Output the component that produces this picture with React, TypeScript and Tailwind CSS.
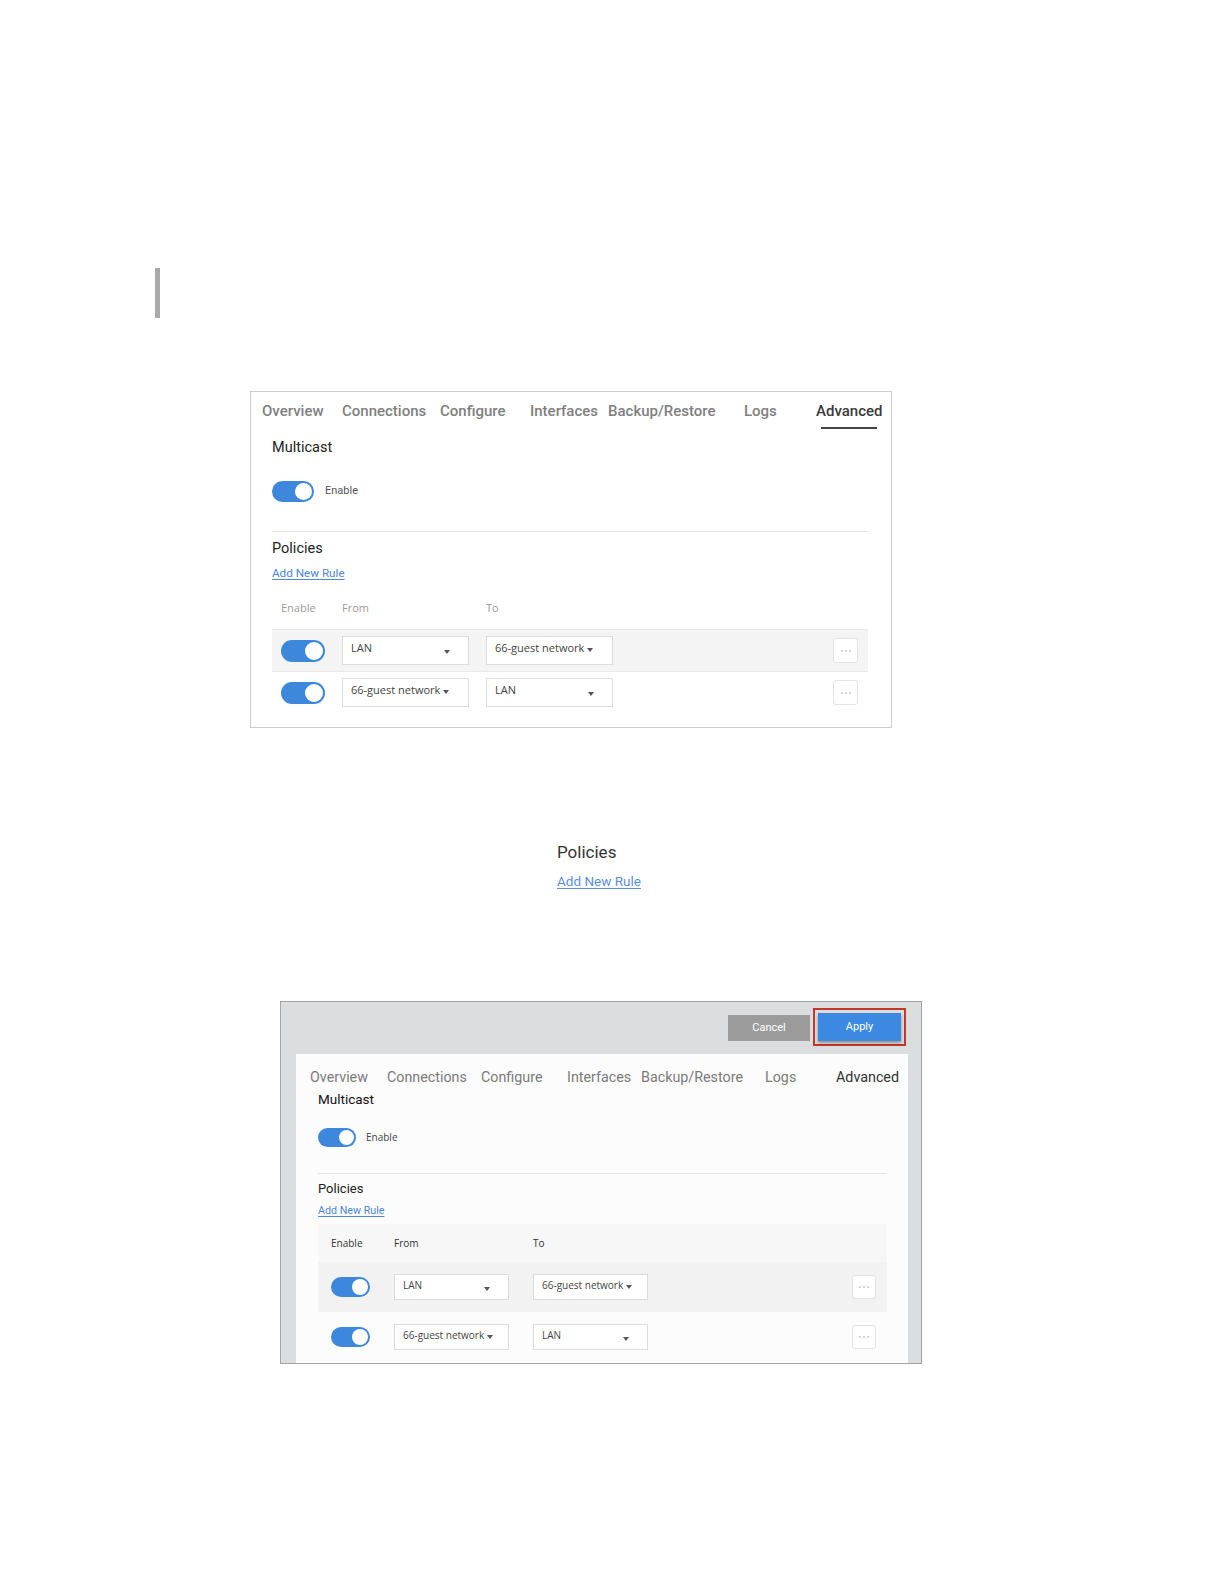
import React from "react";

const roboto = { fontFamily: "Roboto, 'Liberation Sans', Arial, sans-serif" };
const open = { fontFamily: "'Open Sans', 'Noto Sans', Arial, sans-serif" };

function Toggle({ w, h }: { w: number; h: number }) {
  const knob = h - 4;
  return (
    <div
      className="rounded-full bg-[#3d87dc] flex items-center justify-end pr-[2px] shrink-0"
      style={{ width: w, height: h }}
    >
      <div className="rounded-full bg-white" style={{ width: knob, height: knob }} />
    </div>
  );
}

function Caret() {
  return (
    <span className="inline-block w-0 h-0 border-l-[3px] border-r-[3px] border-t-[4px] border-l-transparent border-r-transparent border-t-[#555] ml-[3px] mt-[3px] shrink-0" />
  );
}

function Select({
  label,
  w,
  h,
  fs,
  spread,
}: {
  label: string;
  w: number;
  h: number;
  fs: number;
  spread: boolean;
}) {
  return (
    <div
      className="bg-white border border-[#dcdcdc] flex items-center pl-[8px] pr-[6px] text-[#444] shrink-0 whitespace-nowrap overflow-hidden"
      style={{ width: w, height: h, fontSize: fs, ...open }}
    >
      {spread ? (
        <div className="flex w-full items-center justify-between pr-[12px]">
          <span className="-mt-[4px]">{label}</span>
          <Caret />
        </div>
      ) : (
        <div className="flex items-center -mt-[4px]">
          <span>{label}</span>
          <Caret />
        </div>
      )}
    </div>
  );
}

function Dots({ s }: { s: number }) {
  return (
    <div
      className="bg-white border border-[#e3e3e3] rounded-[3px] flex items-center justify-center gap-[2px] shrink-0"
      style={{ width: s, height: s }}
    >
      <span className="w-[2px] h-[2px] rounded-full bg-[#c8c8c8]" />
      <span className="w-[2px] h-[2px] rounded-full bg-[#c8c8c8]" />
      <span className="w-[2px] h-[2px] rounded-full bg-[#c8c8c8]" />
    </div>
  );
}

export default function App() {
  return (
    <div className="w-[1224px] h-[1584px] bg-white overflow-hidden pt-[268px]">
      {/* left bar */}
      <div className="ml-[155px] w-[5px] h-[50px] bg-[#a9a9a9]" />

      {/* Panel 1 */}
      <div className="mt-[73px] ml-[250px] w-[642px] h-[337px] border border-[#cbcbcb] bg-white flex flex-col">
        <div className="flex pl-[11px] text-[15px] font-medium text-[#7f7f7f]" style={roboto}>
          <div className="w-[80px] pt-[9px] leading-[20px]">Overview</div>
          <div className="w-[98px] pt-[9px] leading-[20px]">Connections</div>
          <div className="w-[90px] pt-[9px] leading-[20px]">Configure</div>
          <div className="w-[78px] pt-[9px] leading-[20px]">Interfaces</div>
          <div className="w-[136px] pt-[9px] leading-[20px]">Backup/Restore</div>
          <div className="w-[72px] pt-[9px] leading-[20px]">Logs</div>
          <div className="flex flex-col">
            <div className="pt-[9px] leading-[20px] text-[#3a3a3a]">Advanced</div>
            <div className="mt-[6px] ml-[5px] w-[56px] h-[2px] bg-[#444]" />
          </div>
        </div>

        <div className="pl-[21px] pr-[23px]">
          <div className="mt-[9px] leading-[20px] text-[14.5px] text-[#222]" style={roboto}>
            Multicast
          </div>
          <div className="mt-[23px] flex items-center">
            <Toggle w={42} h={21} />
            <span className="ml-[11px] text-[11px] text-[#555]" style={roboto}>
              Enable
            </span>
          </div>
          <div className="mt-[29px] h-px bg-[#e2e2e2]" />
          <div className="mt-[7px] leading-[20px] text-[14.5px] text-[#222]" style={roboto}>
            Policies
          </div>
          <div
            className="mt-[7px] leading-[14px] text-[11.7px] text-[#4d86d6] underline underline-offset-2"
            style={roboto}
          >
            Add New Rule
          </div>
          <div
            className="mt-[21px] flex leading-[14px] text-[11px] text-[#9a9a9a]"
            style={open}
          >
            <div className="w-[70px] pl-[9px]">Enable</div>
            <div className="w-[144px]">From</div>
            <div>To</div>
          </div>
          <div className="mt-[14px] h-[42px] bg-[#f4f4f4] border-t border-[#e8e8e8] flex items-center">
            <div className="w-[70px] pl-[9px]">
              <Toggle w={44} h={22} />
            </div>
            <div className="w-[144px]">
              <Select label="LAN" w={127} h={29} fs={11} spread />
            </div>
            <Select label="66-guest network" w={127} h={29} fs={11} spread={false} />
            <div className="ml-auto mr-[10px]">
              <Dots s={25} />
            </div>
          </div>
          <div className="h-[42px] border-t border-[#e8e8e8] flex items-center">
            <div className="w-[70px] pl-[9px]">
              <Toggle w={44} h={22} />
            </div>
            <div className="w-[144px]">
              <Select label="66-guest network" w={127} h={29} fs={11} spread={false} />
            </div>
            <Select label="LAN" w={127} h={29} fs={11} spread />
            <div className="ml-auto mr-[10px]">
              <Dots s={25} />
            </div>
          </div>
        </div>
      </div>

      {/* Middle snippet */}
      <div className="mt-[114px] ml-[557px]">
        <div className="leading-[20px] text-[17px] text-[#333]" style={roboto}>
          Policies
        </div>
        <div
          className="mt-[11px] leading-[16px] text-[13.5px] text-[#5a8fdc] underline underline-offset-2"
          style={roboto}
        >
          Add New Rule
        </div>
      </div>

      {/* Panel 2 */}
      <div className="mt-[112px] ml-[280px] w-[642px] h-[363px] border border-[#a3a3a3] bg-[#dcdddf] flex flex-col overflow-hidden">
        <div className="pt-[6px] pr-[15px] flex justify-end items-center">
          <div
            className="w-[82px] h-[26px] bg-[#9b9b9b] text-white text-[11px] flex items-center justify-center mt-[2px]"
            style={roboto}
          >
            Cancel
          </div>
          <div className="ml-[3px] border-2 border-[#c0392b] p-[3px]">
            <div
              className="w-[83px] h-[28px] bg-[#3b89e0] text-white text-[11px] flex items-center justify-center shadow-[0_2px_3px_rgba(0,0,0,0.35)]"
              style={roboto}
            >
              Apply
            </div>
          </div>
        </div>

        <div className="mt-[8px] ml-[15px] w-[612px] flex-1 bg-[#fcfcfc] flex flex-col">
          <div className="flex pl-[14px] pt-[13px] leading-[20px] text-[14.3px] text-[#7a7a7a]" style={roboto}>
            <div className="w-[77px]">Overview</div>
            <div className="w-[94px]">Connections</div>
            <div className="w-[86px]">Configure</div>
            <div className="w-[74px]">Interfaces</div>
            <div className="w-[124px]">Backup/Restore</div>
            <div className="w-[71px]">Logs</div>
            <div className="text-[#333]">Advanced</div>
          </div>
          <div className="pl-[22px] pr-[21px]">
            <div className="mt-[2px] leading-[20px] text-[13.5px] text-[#111]" style={roboto}>
              Multicast
            </div>
            <div className="mt-[19px] flex items-center">
              <Toggle w={38} h={19} />
              <span className="ml-[10px] text-[10px] text-[#444]" style={open}>
                Enable
              </span>
            </div>
            <div className="mt-[26px] h-px bg-[#e4e4e4]" />
            <div className="mt-[6px] leading-[18px] text-[13px] text-[#222]" style={roboto}>
              Policies
            </div>
            <div
              className="mt-[6px] leading-[14px] text-[10.7px] text-[#4d86d6] underline underline-offset-2"
              style={roboto}
            >
              Add New Rule
            </div>
            <div
              className="mt-[6px] h-[38px] bg-[#f7f7f7] flex items-center text-[10px] text-[#333]"
              style={open}
            >
              <div className="w-[76px] pl-[13px]">Enable</div>
              <div className="w-[139px]">From</div>
              <div>To</div>
            </div>
            <div className="h-[50px] bg-[#f2f2f2] flex items-center">
              <div className="w-[76px] pl-[13px]">
                <Toggle w={39} h={20} />
              </div>
              <div className="w-[139px]">
                <Select label="LAN" w={115} h={26} fs={10} spread />
              </div>
              <Select label="66-guest network" w={115} h={26} fs={10} spread={false} />
              <div className="ml-auto mr-[11px]">
                <Dots s={24} />
              </div>
            </div>
            <div className="h-[50px] flex items-center">
              <div className="w-[76px] pl-[13px]">
                <Toggle w={39} h={20} />
              </div>
              <div className="w-[139px]">
                <Select label="66-guest network" w={115} h={26} fs={10} spread={false} />
              </div>
              <Select label="LAN" w={115} h={26} fs={10} spread />
              <div className="ml-auto mr-[11px]">
                <Dots s={24} />
              </div>
            </div>
          </div>
        </div>
      </div>
    </div>
  );
}
